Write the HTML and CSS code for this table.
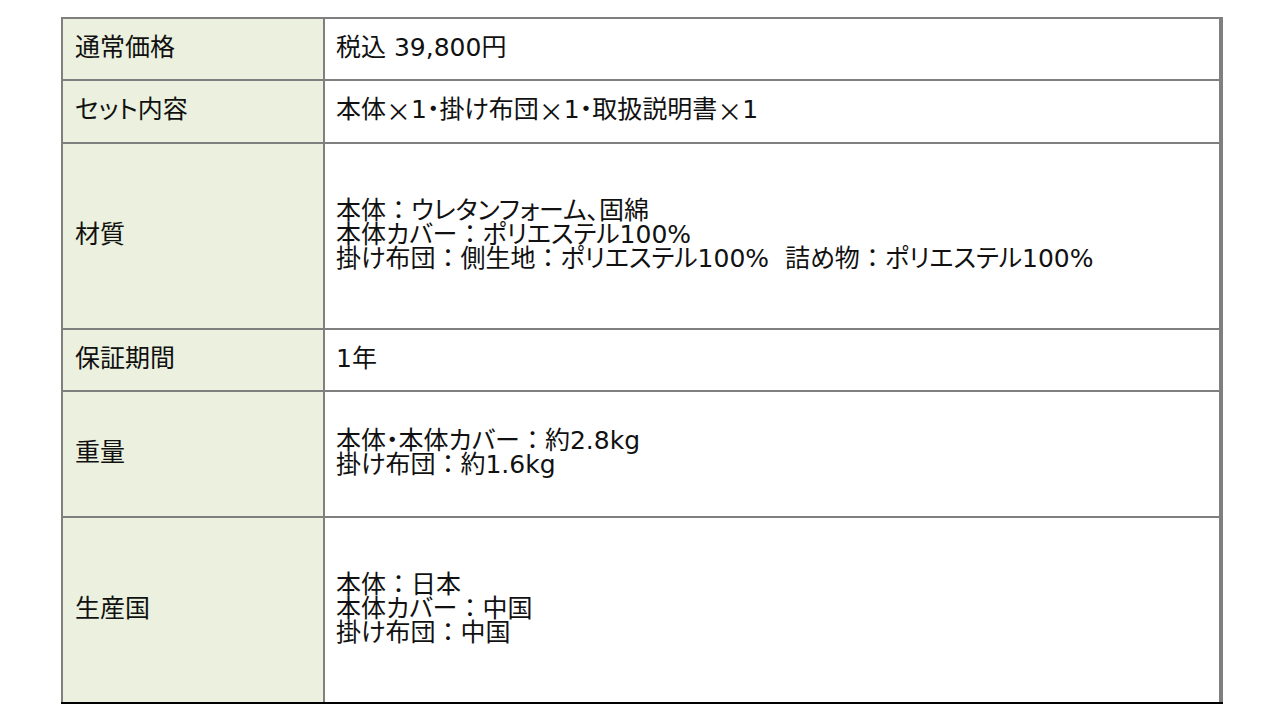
FILE: index.html
```html
<!DOCTYPE html>
<html lang="ja">
<head>
<meta charset="utf-8">
<title>仕様</title>
<link rel="stylesheet" href="styles.css">
</head>
<body>
<div class="spec">
  <div class="label">通常価格</div>
  <div class="value">税込 39,800円</div>

  <div class="label">セット内容</div>
  <div class="value">本体<span class="x">×</span>1・掛け布団<span class="x">×</span>1・取扱説明書<span class="x">×</span>1</div>

  <div class="label">材質</div>
  <div class="value"><div class="lines"><span>本体<span class="fw">：</span>ウレタンフォーム、固綿</span><span>本体カバー<span class="fw">：</span>ポリエステル100%</span><span>掛け布団<span class="fw">：</span>側生地<span class="fw">：</span>ポリエステル100%&nbsp;&nbsp;詰め物<span class="fw">：</span>ポリエステル100%</span></div></div>

  <div class="label">保証期間</div>
  <div class="value">1年</div>

  <div class="label">重量</div>
  <div class="value"><div class="lines"><span>本体・本体カバー<span class="fw">：</span>約2.8kg</span><span>掛け布団<span class="fw">：</span>約1.6kg</span></div></div>

  <div class="label">生産国</div>
  <div class="value"><div class="lines"><span>本体<span class="fw">：</span>日本</span><span>本体カバー<span class="fw">：</span>中国</span><span>掛け布団<span class="fw">：</span>中国</span></div></div>
</div>
</body>
</html>
```
FILE: styles.css
```css
html, body {
  margin: 0;
  padding: 0;
  background: #ffffff;
}
body {
  font-family: "DejaVu Sans", "Noto Sans CJK JP", sans-serif;
  font-size: 25px;
  color: #111111;
  font-feature-settings: "palt";
}
.spec {
  display: grid;
  grid-template-columns: 260px 894px;
  grid-template-rows: 60px 61px 184px 60px 124px 184px;
  gap: 2px;
  width: 1158px;
  padding: 2px 2px 0 2px;
  margin: 17px 0 0 61px;
  background: #7f7f7f;
  border-bottom: 2px solid #000000;
}
.label, .value {
  display: flex;
  align-items: center;
  line-height: 24px;
  white-space: nowrap;
  padding-bottom: 3px;
}
.label {
  background: #ebf1de;
  padding-left: 12px;
}
.value {
  background: #ffffff;
  padding-left: 11px;
}
.lines {
  display: flex;
  flex-direction: column;
}
.fw {
  font-feature-settings: normal;
}
.x {
  font-family: "Noto Sans CJK JP", sans-serif;
  font-feature-settings: normal;
}
```
